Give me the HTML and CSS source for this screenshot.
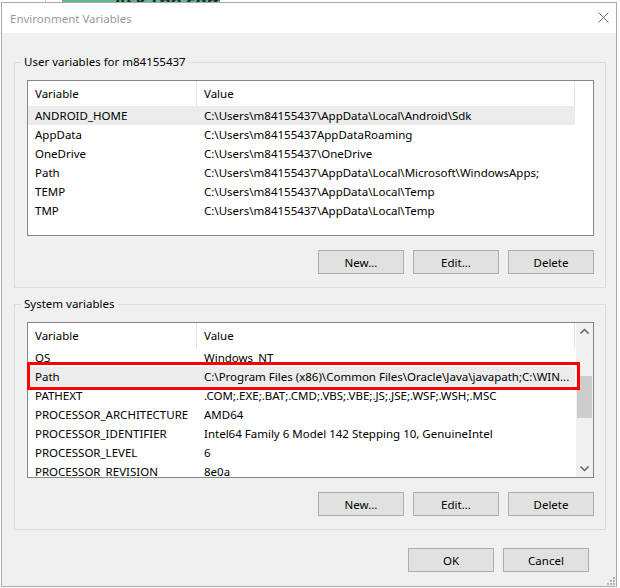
FILE: index.html
```html
<!DOCTYPE html>
<html lang="en">
<head>
<meta charset="UTF-8" />
<meta name="viewport" content="width=device-width, initial-scale=1" />
<title>Environment Variables</title>
<link rel="stylesheet" href="styles.css">
</head>
<body>

<div class="backdrop">
  <span class="backdrop-line"></span>
  <span class="backdrop-tab"><span>Ask the community</span></span>
</div>

<div class="window">
  <div class="titlebar">
    <span class="title">Environment Variables</span>
    <svg class="close" width="11" height="11" viewBox="0 0 11 11">
      <path d="M0.5 0.5 L10.5 10.5 M10.5 0.5 L0.5 10.5" stroke="#707070" stroke-width="1" fill="none" />
    </svg>
  </div>

  <div class="client">
    <div class="group">
      <span class="group-label">User variables for m84155437</span>
      <div class="listview">
        <div class="lv-main">
          <div class="lv-head">
            <div class="cell col-var">Variable</div>
            <div class="cell col-val">Value</div>
          </div>
          <div class="lv-rows">
            <div class="row selected"><div class="cell col-var">ANDROID_HOME</div><div class="cell col-val">C:\Users\m84155437\AppData\Local\Android\Sdk</div></div>
            <div class="row"><div class="cell col-var">AppData</div><div class="cell col-val">C:\Users\m84155437AppDataRoaming</div></div>
            <div class="row"><div class="cell col-var">OneDrive</div><div class="cell col-val">C:\Users\m84155437\OneDrive</div></div>
            <div class="row"><div class="cell col-var">Path</div><div class="cell col-val">C:\Users\m84155437\AppData\Local\Microsoft\WindowsApps;</div></div>
            <div class="row"><div class="cell col-var">TEMP</div><div class="cell col-val">C:\Users\m84155437\AppData\Local\Temp</div></div>
            <div class="row"><div class="cell col-var">TMP</div><div class="cell col-val">C:\Users\m84155437\AppData\Local\Temp</div></div>
          </div>
        </div>
      </div>
      <div class="btn-row">
        <button>New...</button>
        <button>Edit...</button>
        <button>Delete</button>
      </div>
    </div>

    <div class="group system">
      <span class="group-label">System variables</span>
      <div class="listview">
        <div class="lv-main">
          <div class="lv-head">
            <div class="cell col-var">Variable</div>
            <div class="cell col-val">Value</div>
          </div>
          <div class="lv-rows">
            <div class="row"><div class="cell col-var">OS</div><div class="cell col-val">Windows_NT</div></div>
            <div class="row selected"><div class="cell col-var">Path</div><div class="cell col-val">C:\Program Files (x86)\Common Files\Oracle\Java\javapath;C:\WIN...</div></div>
            <div class="row"><div class="cell col-var">PATHEXT</div><div class="cell col-val">.COM;.EXE;.BAT;.CMD;.VBS;.VBE;.JS;.JSE;.WSF;.WSH;.MSC</div></div>
            <div class="row"><div class="cell col-var">PROCESSOR_ARCHITECTURE</div><div class="cell col-val">AMD64</div></div>
            <div class="row"><div class="cell col-var">PROCESSOR_IDENTIFIER</div><div class="cell col-val">Intel64 Family 6 Model 142 Stepping 10, GenuineIntel</div></div>
            <div class="row"><div class="cell col-var">PROCESSOR_LEVEL</div><div class="cell col-val">6</div></div>
            <div class="row"><div class="cell col-var">PROCESSOR_REVISION</div><div class="cell col-val">8e0a</div></div>
          </div>
        </div>
        <div class="scrollbar">
          <svg class="arrow" width="17" height="17" viewBox="0 0 17 17">
            <path d="M4.5 10.5 L8.5 6.5 L12.5 10.5" stroke="#606060" stroke-width="1.5" fill="none" />
          </svg>
          <div class="track"><div class="thumb"></div></div>
          <svg class="arrow" width="17" height="17" viewBox="0 0 17 17">
            <path d="M4.5 6.5 L8.5 10.5 L12.5 6.5" stroke="#606060" stroke-width="1.5" fill="none" />
          </svg>
        </div>
        <!-- annotation drawn over the screenshot -->
        <div class="mark"></div>
      </div>
      <div class="btn-row">
        <button>New...</button>
        <button>Edit...</button>
        <button>Delete</button>
      </div>
    </div>

    <div class="dialog-buttons">
      <button>OK</button>
      <button>Cancel</button>
    </div>
  </div>

  <svg class="grip" width="8" height="8" viewBox="0 0 8 8">
    <rect x="6" y="0" width="2" height="2" fill="#b0b0b0" />
    <rect x="3" y="3" width="2" height="2" fill="#b0b0b0" />
    <rect x="6" y="3" width="2" height="2" fill="#b0b0b0" />
    <rect x="0" y="6" width="2" height="2" fill="#b0b0b0" />
    <rect x="3" y="6" width="2" height="2" fill="#b0b0b0" />
    <rect x="6" y="6" width="2" height="2" fill="#b0b0b0" />
  </svg>
</div>

</body>
</html>
```

FILE: styles.css
```css
* {
  box-sizing: border-box;
}
body {
  margin: 0;
  background: #fff;
  font-family: "Noto Sans", "DejaVu Sans", sans-serif;
  font-size: 11.5px;
  color: #000;
}
.backdrop {
  height: 2px;
  display: flex;
  overflow: hidden;
}
.backdrop-line {
  width: 1px;
  margin-left: 45px;
  background: #c8c8c8;
}
.backdrop-tab {
  height: 2px;
  width: 158px;
  margin-left: 16px;
  background: #5eba8c;
  overflow: hidden;
}
.backdrop-tab span {
  display: block;
  height: 2px;
  line-height: 2px;
  padding-left: 52px;
  font-size: 18px;
  font-weight: bold;
  color: #1d2d23;
  white-space: nowrap;
  overflow: hidden;
}
.window {
  position: relative;
  width: 616px;
  height: 585px;
  margin-left: 1px;
  border: 1px solid #aaaaaa;
  background: #f0f0f0;
}
.titlebar {
  height: 30px;
  background: #fff;
  display: flex;
  align-items: center;
  justify-content: space-between;
  padding: 0 7px 0 8px;
}
.title {
  color: #999;
}
.close {
  margin-top: -1px;
}
.client {
  padding-top: 29px;
}
.group {
  width: 592px;
  margin-left: 12px;
  border: 1px solid #dcdcdc;
  padding: 0 11px 13px 12px;
}
.group.system {
  margin-top: 16px;
}
.group-label {
  display: block;
  width: fit-content;
  margin: -9px 0 0 -6px;
  padding: 0 3px;
  line-height: 16px;
  background: #f0f0f0;
}
.listview {
  position: relative;
  display: flex;
  height: 156px;
  margin-top: 10px;
  border: 1px solid #828790;
  background: #fff;
}
.lv-main {
  flex: 1;
  overflow: hidden;
}
.lv-head {
  display: flex;
  height: 25px;
  line-height: 25px;
}
.lv-head .cell {
  border-right: 1px solid #e5e5e5;
}
.cell {
  padding-left: 7px;
  white-space: nowrap;
  overflow: hidden;
}
.col-var {
  width: 169px;
}
.col-val {
  width: 378px;
}
.lv-rows {
  height: 129px;
  overflow: hidden;
}
.row {
  display: flex;
  width: 547px;
  height: 19px;
  line-height: 19px;
}
.row.selected {
  background: #ececec;
}
.scrollbar {
  width: 17px;
  display: flex;
  flex-direction: column;
  background: #f0f0f0;
}
.arrow {
  display: block;
}
.track {
  flex: 1;
  padding-top: 36px;
}
.thumb {
  height: 42px;
  margin: 0 1px;
  background: #cdcdcd;
}
.mark {
  position: absolute;
  left: -1px;
  top: 39px;
  width: 553px;
  height: 28px;
  border: 3px solid #ff0000;
}
.btn-row {
  display: flex;
  justify-content: flex-end;
  gap: 9px;
  margin-top: 14px;
}
button {
  width: 86px;
  height: 24px;
  padding: 0;
  font-family: inherit;
  font-size: 11.5px;
  color: #000;
  background: #e1e1e1;
  border: 1px solid #adadad;
  border-radius: 0;
}
.dialog-buttons {
  display: flex;
  justify-content: flex-end;
  gap: 9px;
  margin-top: 18px;
  padding-right: 27px;
}
.grip {
  position: absolute;
  right: 1px;
  bottom: 1px;
}
```
